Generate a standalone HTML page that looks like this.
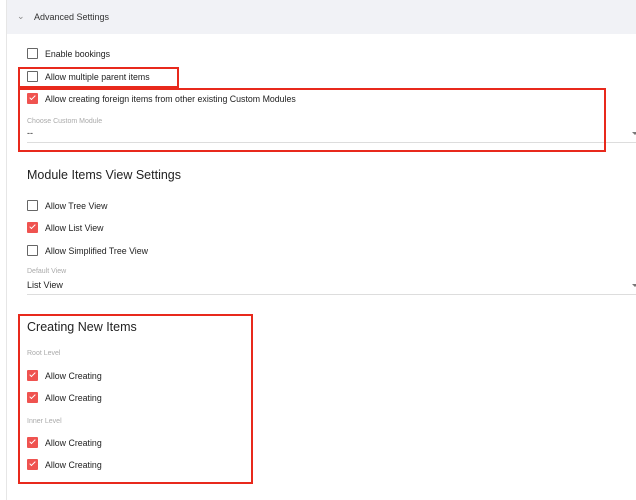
<!DOCTYPE html>
<html><head><style>
body{margin:0;width:636px;height:500px;background:#fff;font-family:"Liberation Sans",sans-serif;position:relative;overflow:hidden;color:#222}
.a{position:absolute;white-space:nowrap}
.hdr{position:absolute;left:7px;top:0;width:629px;height:34px;background:#f1f2f6}
.lb{position:absolute;left:6px;top:0;width:1px;height:500px;background:#e6e6e6}
.cb{position:absolute;left:27px;width:9px;height:9px;border:1px solid #666;border-radius:1px}
.cb.on{background:#ef5350;border-color:#ef5350}
.cb.on:after{content:"";position:absolute;left:3px;top:0px;width:2px;height:5px;border:solid #fff;border-width:0 1.5px 1.5px 0;transform:rotate(45deg)}
.t{position:absolute;left:45px;font-size:8.8px;color:#222;margin-top:1px;white-space:nowrap}
.sm{position:absolute;left:27px;font-size:7px;color:#aaa}
.line{position:absolute;left:27px;width:609px;height:1px;background:#ddd}
.red{position:absolute;border:2px solid #e8291c;box-sizing:border-box}
.arr{position:absolute;left:632px;width:0;height:0;border-left:3px solid transparent;border-right:3px solid transparent;border-top:3px solid #777}
.h{position:absolute;left:27px;font-size:12.5px;color:#222;white-space:nowrap}
</style></head><body>
<div class="lb"></div>
<div class="hdr"></div>
<div class="a" style="left:17px;top:11px;font-size:9px;color:#888">&#8964;</div>
<div class="a" style="left:34px;top:12px;font-size:9px;color:#333">Advanced Settings</div>

<div class="cb" style="top:48px"></div><div class="t" style="top:48px">Enable bookings</div>
<div class="cb" style="top:71px"></div><div class="t" style="top:71px">Allow multiple parent items</div>
<div class="cb on" style="top:93px"></div><div class="t" style="top:93px">Allow creating foreign items from other existing Custom Modules</div>
<div class="sm" style="top:118px">Choose Custom Module</div>
<div class="a" style="left:27px;top:128px;font-size:9px">--</div>
<div class="arr" style="top:132px"></div>
<div class="line" style="top:142px"></div>
<div class="red" style="left:18px;top:67px;width:161px;height:21px"></div>
<div class="red" style="left:18px;top:88px;width:588px;height:64px"></div>

<div class="h" style="top:168px">Module Items View Settings</div>
<div class="cb" style="top:200px"></div><div class="t" style="top:200px">Allow Tree View</div>
<div class="cb on" style="top:222px"></div><div class="t" style="top:222px">Allow List View</div>
<div class="cb" style="top:245px"></div><div class="t" style="top:245px">Allow Simplified Tree View</div>
<div class="sm" style="top:268px">Default View</div>
<div class="a" style="left:27px;top:280px;font-size:9px">List View</div>
<div class="arr" style="top:284px"></div>
<div class="line" style="top:294px"></div>

<div class="red" style="left:18px;top:314px;width:235px;height:170px"></div>
<div class="h" style="top:320px">Creating New Items</div>
<div class="sm" style="top:350px">Root Level</div>
<div class="cb on" style="top:370px"></div><div class="t" style="top:370px">Allow Creating</div>
<div class="cb on" style="top:392px"></div><div class="t" style="top:392px">Allow Creating</div>
<div class="sm" style="top:418px">Inner Level</div>
<div class="cb on" style="top:437px"></div><div class="t" style="top:437px">Allow Creating</div>
<div class="cb on" style="top:459px"></div><div class="t" style="top:459px">Allow Creating</div>
</body></html>
